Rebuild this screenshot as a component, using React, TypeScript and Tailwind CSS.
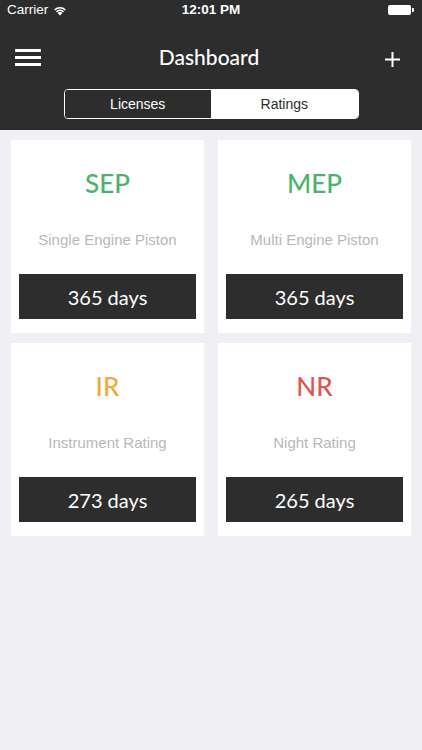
import React from 'react';

type Rating = {
  code: string;
  name: string;
  days: number;
  color: string;
};

const ratings: Rating[] = [
  { code: 'SEP', name: 'Single Engine Piston', days: 365, color: 'text-[#4cb36c]' },
  { code: 'MEP', name: 'Multi Engine Piston', days: 365, color: 'text-[#4cb36c]' },
  { code: 'IR', name: 'Instrument Rating', days: 273, color: 'text-[#f2a93b]' },
  { code: 'NR', name: 'Night Rating', days: 265, color: 'text-[#e2524f]' },
];

const futura = { fontFamily: 'Lato, "Open Sans", sans-serif' };

const StatusBar: React.FC = () => (
  <div className="h-[20px] flex items-center justify-between px-[7px] text-white text-[13.5px] font-['Liberation_Sans',sans-serif]">
    <div className="flex items-center gap-[5px] w-[100px]">
      <span>Carrier</span>
      <svg width="14" height="11" viewBox="0 0 14 11" fill="white">
        <path d="M7 10.5 L4.6 8 A3.4 3.4 0 0 1 9.4 8 Z" />
        <path d="M2.9 6.3 A5.8 5.8 0 0 1 11.1 6.3 L10 7.4 A4.3 4.3 0 0 0 4 7.4 Z" />
        <path d="M1.1 4.5 A8.3 8.3 0 0 1 12.9 4.5 L11.8 5.6 A6.8 6.8 0 0 0 2.2 5.6 Z" />
      </svg>
    </div>
    <span className="font-bold">12:01 PM</span>
    <div className="w-[100px] flex justify-end pr-[1px]">
      <div className="flex items-center">
        <div className="w-[23px] h-[10px] bg-white rounded-[2px]" />
        <div className="w-[2px] h-[4px] bg-white rounded-r-[1px] ml-[1px]" />
      </div>
    </div>
  </div>
);

const Header: React.FC = () => (
  <header className="bg-[#2d2d2d] h-[130px]">
    <StatusBar />
    <div className="mt-[22px] h-[30px] flex items-center pl-[15px] pr-[22px]">
      <div className="flex-1">
        <div className="w-[26px] flex flex-col gap-[4px]">
          <div className="h-[3px] bg-white" />
          <div className="h-[3px] bg-white" />
          <div className="h-[3px] bg-white" />
        </div>
      </div>
      <h1 className="text-white text-[21px] font-medium ml-[3px]" style={futura}>
        Dashboard
      </h1>
      <div className="flex-1 flex justify-end">
        <svg width="15" height="15" viewBox="0 0 15 15" className="mt-[5px]">
          <path d="M7.5 0 V15 M0 7.5 H15" stroke="white" strokeWidth="2" />
        </svg>
      </div>
    </div>
    <div className="mt-[17px] flex justify-center">
      <div className="w-[295px] h-[30px] border border-white rounded-[4px] flex overflow-hidden text-[14px] font-['Liberation_Sans',sans-serif]">
        <div className="flex-1 flex items-center justify-center text-white bg-[#2d2d2d]">Licenses</div>
        <div className="flex-1 flex items-center justify-center text-[#2d2d2d] bg-white">Ratings</div>
      </div>
    </div>
  </header>
);

const RatingCard: React.FC<{ r: Rating }> = ({ r }) => (
  <div className="bg-white h-[193px] flex flex-col items-center px-[8px] pb-[14px]">
    <div className={`pt-[28px] text-[26px] leading-[30px] font-medium ${r.color}`} style={futura}>
      {r.code}
    </div>
    <div className="mt-[32px] text-[15px] leading-[20px] text-[#b8b8b8] font-['Liberation_Sans',sans-serif]">
      {r.name}
    </div>
    <div
      className="mt-auto w-full h-[45px] bg-[#2d2d2d] flex items-center justify-center text-white text-[20px]"
      style={futura}
    >
      {r.days} days
    </div>
  </div>
);

const App: React.FC = () => {
  return (
    <div className="min-h-screen bg-[#efeff4]">
      <Header />
      <main className="grid grid-cols-2 gap-x-[14px] gap-y-[10px] px-[11px] pt-[10px]">
        {ratings.map((r) => (
          <RatingCard key={r.code} r={r} />
        ))}
      </main>
    </div>
  );
};

export default App;
